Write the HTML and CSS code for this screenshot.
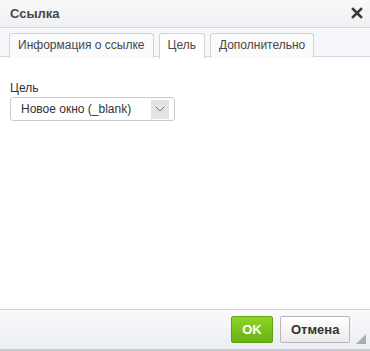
FILE: index.html
```html
<!DOCTYPE html>
<html lang="ru">
<head>
    <meta charset="UTF-8">
    <title>Ссылка</title>
    <link rel="stylesheet" href="styles.css">
</head>
<body>
    <div class="dialog">
        <div class="dialog-title">
            <span>Ссылка</span>
            <a class="close" href="#" title="Закрыть">
                <svg width="12" height="12" viewBox="0 0 12 12">
                    <path d="M2 2 L10 10 M10 2 L2 10" stroke="#3b3b3b" stroke-width="2.6" stroke-linecap="square"/>
                </svg>
            </a>
        </div>
        <div class="tabs">
            <a class="tab" href="#">Информация о ссылке</a>
            <a class="tab active" href="#">Цель</a>
            <a class="tab" href="#">Дополнительно</a>
        </div>
        <div class="dialog-body">
            <label class="field-label" for="target">Цель</label>
            <div class="select">
                <span class="select-value">Новое окно (_blank)</span>
                <span class="select-arrow">
                    <svg width="10" height="6" viewBox="0 0 10 6">
                        <path d="M0.5 0.5 L5 5 L9.5 0.5" fill="none" stroke="#777" stroke-width="1"/>
                    </svg>
                </span>
            </div>
        </div>
        <div class="dialog-footer">
            <button class="btn btn-ok">OK</button>
            <button class="btn btn-cancel">Отмена</button>
            <span class="resizer"></span>
        </div>
    </div>
</body>
</html>
```
FILE: styles.css
```css
body {
    margin: 0;
    font-family: "Liberation Sans", Arial, sans-serif;
    font-size: 12px;
    color: #333;
    background: #fff;
}
.dialog {
    width: 370px;
    height: 351px;
    display: flex;
    flex-direction: column;
    background: #fff;
}
.dialog-title {
    height: 27px;
    display: flex;
    align-items: center;
    justify-content: space-between;
    padding: 0 7px 0 10px;
    background: linear-gradient(#f9f9fa, #eff0f2);
    border-bottom: 1px solid #d1d3d6;
    font-size: 13px;
    font-weight: bold;
    color: #474747;
}
.close {
    display: flex;
    width: 12px;
    height: 12px;
    margin-top: -1px;
}
.tabs {
    display: flex;
    gap: 5px;
    height: 29px;
    padding: 5px 0 0 9px;
    box-sizing: border-box;
    background: #f6f7fa;
    border-bottom: 1px solid #d5d7db;
}
.tab {
    height: 24px;
    line-height: 23px;
    padding: 0 8px;
    border: 1px solid #d1d3d6;
    border-bottom: none;
    border-radius: 3px 3px 0 0;
    background: #fafafa;
    color: #474747;
    text-decoration: none;
}
.tab.active {
    background: #fff;
    height: 25px;
    margin-bottom: -1px;
}
.dialog-body {
    flex: 1;
    padding: 24px 10px 0;
}
.field-label {
    display: block;
    line-height: 14px;
    margin-bottom: 2px;
    color: #333;
}
.select {
    width: 165px;
    height: 24px;
    box-sizing: border-box;
    display: flex;
    align-items: center;
    justify-content: space-between;
    padding: 1px 5px 1px 10px;
    border: 1px solid #c9cccf;
    border-radius: 3px;
    color: #333;
}
.select-arrow {
    width: 18px;
    height: 19px;
    display: flex;
    align-items: center;
    justify-content: center;
    background: #e3e3e3;
}
.dialog-footer {
    height: 39px;
    position: relative;
    display: flex;
    align-items: center;
    justify-content: flex-end;
    gap: 7px;
    padding: 0 20px 0 0;
    background: linear-gradient(#f9fafb, #eaedf3);
    border-top: 1px solid #d1d3d6;
    border-bottom: 2px solid #c6c8cc;
}
.btn {
    height: 27px;
    padding: 0 10px;
    border-radius: 2px;
    font-family: "Liberation Sans", Arial, sans-serif;
    font-size: 13px;
    font-weight: bold;
    cursor: pointer;
}
.btn-ok {
    width: 42px;
    color: #fff;
    background: linear-gradient(#8ed426, #68b212);
    border: 1px solid #5fa20f;
}
.btn-cancel {
    width: 70px;
    color: #333;
    background: linear-gradient(#ffffff, #eaeaea);
    border: 1px solid #b4b6b9;
}
.resizer {
    position: absolute;
    right: 4px;
    bottom: 5px;
    width: 0;
    height: 0;
    border-left: 10px solid transparent;
    border-bottom: 10px solid #a9acb0;
}
```
